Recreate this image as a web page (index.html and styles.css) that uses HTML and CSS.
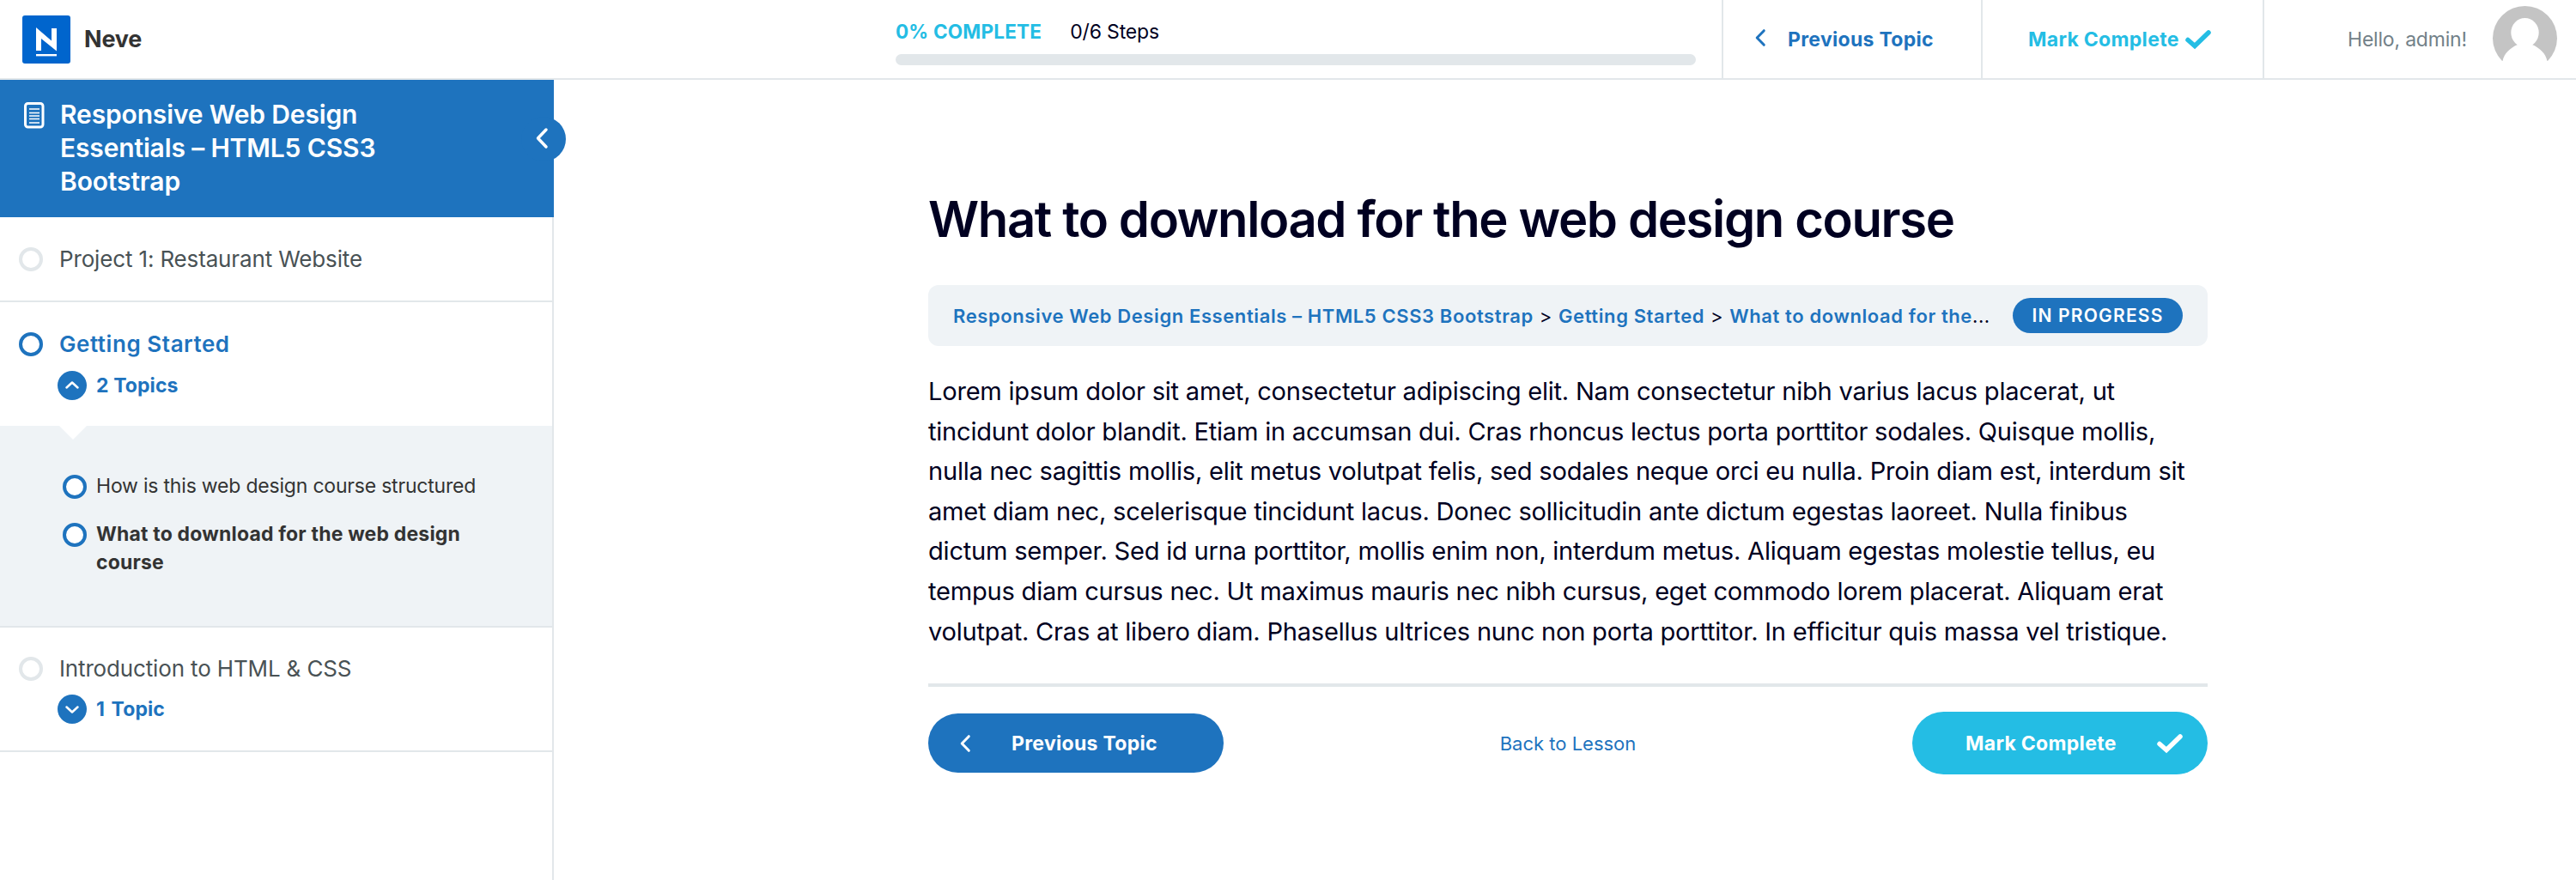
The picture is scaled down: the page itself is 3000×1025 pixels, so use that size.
FILE: index.html
```
<!DOCTYPE html>
<html lang="en">
<head>
    <meta charset="UTF-8">
    <title>What to download for the web design course</title>
    <link rel="stylesheet" href="styles.css">
</head>
<body>
    <header class="header">
        <a class="brand" href="#">
            <svg class="brand-logo" viewBox="0 0 56 56">
                <rect width="56" height="56" rx="3" fill="#0065cd"/>
                <path d="M16 14 34 29.5V15h6v26.5L22 27v14h-6z" fill="#fff"/>
                <rect x="16" y="45" width="24" height="2.4" fill="#fff"/>
            </svg>
            <span class="brand-name">Neve</span>
        </a>
        <div class="progress">
            <div class="progress-stats">
                <span class="progress-percent">0% Complete</span>
                <span class="progress-steps">0/6 Steps</span>
            </div>
            <div class="progress-bar"></div>
        </div>
        <a class="header-cell header-prev" href="#">
            <svg class="chevron" viewBox="0 0 12 20"><path d="M10.3 1.7 2.2 10l8.1 8.3"/></svg>
            <span>Previous Topic</span>
        </a>
        <a class="header-cell header-complete" href="#">
            <span>Mark Complete</span>
            <svg class="check" viewBox="0 0 30 22"><path d="M3 11.5 11 18.5 27 3"/></svg>
        </a>
        <div class="header-cell header-user">
            <span>Hello, admin!</span>
            <svg class="avatar" viewBox="0 0 75 75">
                <circle cx="37.5" cy="37.5" r="37.5" fill="#c4c4c4"/>
                <ellipse cx="37.5" cy="31" rx="16.2" ry="17" fill="#fff"/>
                <path d="M29 45C20 49 13.5 55 11.5 64H0v11h75V64H63.5C61.5 55 55 49 46 45z" fill="#fff"/>
            </svg>
        </div>
    </header>

    <div class="layout">
        <aside class="sidebar">
            <div class="course">
                <svg class="course-icon" viewBox="0 0 24 31">
                    <rect x="1.5" y="1.5" width="20.5" height="27.5" rx="3"/>
                    <path d="M6 8h12M6 12.5h12M6 16h12M6 19.5h12M6 24h12"/>
                </svg>
                <div class="course-title">Responsive Web Design<br>Essentials – HTML5 CSS3<br>Bootstrap</div>
                <button class="sidebar-toggle" aria-label="Collapse">
                    <svg class="chevron" viewBox="0 0 14 24"><path d="M12 2 2.5 12 12 22"/></svg>
                </button>
            </div>

            <div class="lesson">
                <div class="lesson-row">
                    <span class="status"></span>
                    <a href="#">Project 1: Restaurant Website</a>
                </div>
            </div>

            <div class="lesson lesson-open">
                <div class="lesson-row current">
                    <span class="status"></span>
                    <a href="#">Getting Started</a>
                </div>
                <div class="expand">
                    <svg class="expand-icon" viewBox="0 0 34 34"><circle cx="17" cy="17" r="17"/><path d="m10.5 19.5 6.5-6 6.5 6"/></svg>
                    <span>2 Topics</span>
                </div>
            </div>
            <div class="topics">
                <div class="topic">
                    <span class="status"></span>
                    <a href="#">How is this web design course structured</a>
                </div>
                <div class="topic topic-current">
                    <span class="status"></span>
                    <a href="#">What to download for the web design<br>course</a>
                </div>
            </div>

            <div class="lesson lesson-closed">
                <div class="lesson-row">
                    <span class="status"></span>
                    <a href="#">Introduction to HTML &amp; CSS</a>
                </div>
                <div class="expand">
                    <svg class="expand-icon" viewBox="0 0 34 34"><circle cx="17" cy="17" r="17"/><path d="m10.5 14.5 6.5 6 6.5-6"/></svg>
                    <span>1 Topic</span>
                </div>
            </div>
        </aside>

        <main class="content">
            <h1>What to download for the web design course</h1>
            <div class="breadcrumbs">
                <div class="crumbs"><a href="#">Responsive Web Design Essentials – HTML5 CSS3 Bootstrap</a><span class="sep">&gt;</span><a href="#">Getting Started</a><span class="sep">&gt;</span><a href="#">What to download for the</a>...</div>
                <span class="badge">In progress</span>
            </div>
            <p class="text">
                Lorem ipsum dolor sit amet, consectetur adipiscing elit. Nam consectetur nibh varius lacus placerat, ut<br>
                tincidunt dolor blandit. Etiam in accumsan dui. Cras rhoncus lectus porta porttitor sodales. Quisque mollis,<br>
                nulla nec sagittis mollis, elit metus volutpat felis, sed sodales neque orci eu nulla. Proin diam est, interdum sit<br>
                amet diam nec, scelerisque tincidunt lacus. Donec sollicitudin ante dictum egestas laoreet. Nulla finibus<br>
                dictum semper. Sed id urna porttitor, mollis enim non, interdum metus. Aliquam egestas molestie tellus, eu<br>
                tempus diam cursus nec. Ut maximus mauris nec nibh cursus, eget commodo lorem placerat. Aliquam erat<br>
                volutpat. Cras at libero diam. Phasellus ultrices nunc non porta porttitor. In efficitur quis massa vel tristique.
            </p>
            <div class="actions">
                <a class="button button-prev" href="#">
                    <svg class="chevron" viewBox="0 0 12 20"><path d="M10.3 1.7 2.2 10l8.1 8.3"/></svg>
                    <span>Previous Topic</span>
                </a>
                <a class="back-link" href="#">Back to Lesson</a>
                <a class="button button-complete" href="#">
                    <span>Mark Complete</span>
                    <svg class="check" viewBox="0 0 30 22"><path d="M3 11.5 11 18.5 27 3"/></svg>
                </a>
            </div>
        </main>
    </div>
</body>
</html>
```
FILE: styles.css
```
* {
    box-sizing: border-box;
}
body {
    margin: 0;
    height: 1025px;
    overflow: hidden;
    font-family: Inter, "Liberation Sans", sans-serif;
    color: #000021;
    background-color: #fff;
}
a {
    color: inherit;
    text-decoration: none;
}
svg {
    display: block;
    flex: none;
    overflow: visible;
}

/* header */
.header {
    display: flex;
    height: 93px;
    border-bottom: 2px solid #e2e7ea;
    white-space: nowrap;
}
.brand {
    display: flex;
    align-items: center;
    gap: 16px;
    padding-left: 26px;
}
.brand-logo {
    width: 56px;
    height: 56px;
}
.brand-name {
    font-size: 27px;
    font-weight: 700;
    letter-spacing: -0.2px;
    color: #333;
}
.progress {
    width: 932px;
    margin: 23px 30px 0 auto;
}
.progress-stats {
    display: flex;
    gap: 33px;
    font-size: 23px;
    line-height: 28px;
}
.progress-percent {
    font-size: 22.5px;
    font-weight: 700;
    letter-spacing: 0.2px;
    text-transform: uppercase;
    color: #24bde4;
}
.progress-steps {
    letter-spacing: -0.15px;
}
.progress-bar {
    height: 13px;
    margin-top: 12px;
    border-radius: 7px;
    background-color: #e2e7ea;
}
.header-cell {
    display: flex;
    align-items: center;
    border-left: 2px solid #e2e7ea;
}
.header-prev,
.header-complete {
    font-size: 23px;
    font-weight: 700;
    letter-spacing: 0.3px;
}
.header-prev {
    width: 302px;
    padding-left: 37px;
    gap: 26px;
    color: #1e73be;
}
.header-complete {
    width: 328px;
    padding-left: 53px;
    gap: 7px;
    color: #24bde4;
}
.header-user {
    width: 365px;
    padding: 0 22px 0 97px;
    justify-content: space-between;
    font-size: 23px;
    letter-spacing: -0.2px;
    color: #728188;
}
.avatar {
    width: 75px;
    height: 75px;
    margin-bottom: 2px;
}
.chevron {
    width: 12px;
    height: 20px;
    margin-bottom: 4px;
    fill: none;
    stroke: currentColor;
    stroke-width: 3;
    stroke-linecap: round;
    stroke-linejoin: round;
}
.check {
    width: 30px;
    height: 22px;
    fill: none;
    stroke: currentColor;
    stroke-width: 5.5;
    stroke-linecap: round;
}

/* sidebar */
.layout {
    display: flex;
}
.sidebar {
    width: 645px;
    height: 932px;
    border-right: 2px solid #e2e7ea;
}
.course {
    position: relative;
    display: flex;
    width: 645px;
    height: 160px;
    padding: 21px 0 0 28px;
    gap: 18px;
    color: #fff;
    background-color: #1e73be;
}
.course-icon {
    width: 24px;
    height: 31px;
    margin-top: 5px;
    fill: none;
    stroke: #fff;
}
.course-icon rect {
    stroke-width: 3;
}
.course-icon path {
    stroke-width: 1.5;
}
.course-title {
    font-size: 30px;
    font-weight: 600;
    line-height: 39px;
    letter-spacing: -0.15px;
}
.sidebar-toggle {
    position: absolute;
    top: 43px;
    right: -14px;
    width: 52px;
    height: 52px;
    padding: 0 0 0 17px;
    border: none;
    border-radius: 50%;
    color: #fff;
    background-color: #1e73be;
}
.sidebar-toggle .chevron {
    width: 14px;
    height: 24px;
    margin: 0 0 2px;
    stroke-width: 3.5;
}
.status {
    flex: none;
    width: 28px;
    height: 28px;
    border: 4px solid #e2e7ea;
    border-radius: 50%;
    background-color: #fff;
}
.lesson {
    padding: 31px 20px 31px 22px;
    border-bottom: 2px solid #e2e7ea;
}
.lesson-open {
    padding-bottom: 30px;
    border-bottom: none;
}
.lesson-closed {
    padding-top: 30px;
}
.lesson-row {
    display: flex;
    align-items: center;
    gap: 19px;
    height: 35px;
    font-size: 26px;
    letter-spacing: -0.15px;
    color: #495255;
}
.lesson-row.current {
    font-weight: 600;
    letter-spacing: 0.55px;
    color: #1e73be;
}
.current .status,
.topic .status {
    border-color: #1e73be;
}
.expand {
    display: flex;
    align-items: center;
    gap: 11px;
    margin: 14px 0 0 45px;
    font-size: 23px;
    font-weight: 700;
    letter-spacing: 0.1px;
    color: #1e73be;
}
.lesson-closed .expand {
    margin-top: 13px;
    word-spacing: 2px;
}
.expand-icon {
    width: 34px;
    height: 34px;
    fill: #1e73be;
}
.expand-icon path {
    fill: none;
    stroke: #fff;
    stroke-width: 2.5;
    stroke-linecap: round;
    stroke-linejoin: round;
}
.topics {
    height: 235px;
    padding: 54px 20px 0 73px;
    border-bottom: 2px solid #e2e7ea;
    background-color: #eff3f6;
}
/* notch pointing down from the open lesson */
.topics::before {
    content: "";
    display: block;
    width: 32px;
    height: 16px;
    margin: -54px 0 38px -4px;
    background-color: #fff;
    clip-path: polygon(0 0, 100% 0, 50% 100%);
}
.topic {
    display: flex;
    gap: 11px;
    margin-bottom: 23px;
    font-size: 23px;
    line-height: 33px;
    letter-spacing: -0.2px;
    color: #333;
}
.topic .status {
    margin-top: 3px;
}
.topic-current {
    font-weight: 700;
    letter-spacing: 0.18px;
}

/* content */
.content {
    width: 1490px;
    margin: 126px 0 0 436px;
}
h1 {
    margin: 0;
    font-size: 58px;
    font-weight: 600;
    line-height: 72px;
    letter-spacing: -1.38px;
    white-space: nowrap;
}
.breadcrumbs {
    display: flex;
    align-items: center;
    justify-content: space-between;
    height: 71px;
    margin-top: 41px;
    padding: 0 29px;
    border-radius: 12px;
    background-color: #eff3f6;
}
.crumbs {
    font-size: 22px;
    letter-spacing: 0.6px;
    white-space: nowrap;
}
.crumbs a {
    font-weight: 600;
    color: #1e73be;
}
.sep {
    margin: 0 7px;
}
.badge {
    width: 198px;
    height: 41px;
    border-radius: 21px;
    font-size: 21px;
    font-weight: 600;
    line-height: 41px;
    letter-spacing: 1.2px;
    text-align: center;
    text-transform: uppercase;
    color: #fff;
    background-color: #1e73be;
}
.text {
    margin: 30px 0 0;
    padding-bottom: 37px;
    border-bottom: 4px solid #e2e7ea;
    font-size: 29.1px;
    line-height: 46.6px;
    letter-spacing: -0.24px;
    white-space: nowrap;
}
.actions {
    display: flex;
    align-items: center;
    justify-content: space-between;
    margin-top: 29px;
}
.button {
    display: flex;
    align-items: center;
    width: 344px;
    height: 69px;
    border-radius: 37px;
    font-size: 23px;
    font-weight: 700;
    letter-spacing: 0.3px;
    color: #fff;
}
.button-prev {
    padding-left: 37px;
    gap: 48px;
    background-color: #1e73be;
}
.button-prev .chevron {
    margin-bottom: 0;
}
.button-complete {
    height: 73px;
    padding: 0 29px 0 62px;
    justify-content: space-between;
    background-color: #24bde4;
}
.back-link {
    font-size: 22px;
    color: #1e73be;
}
```
